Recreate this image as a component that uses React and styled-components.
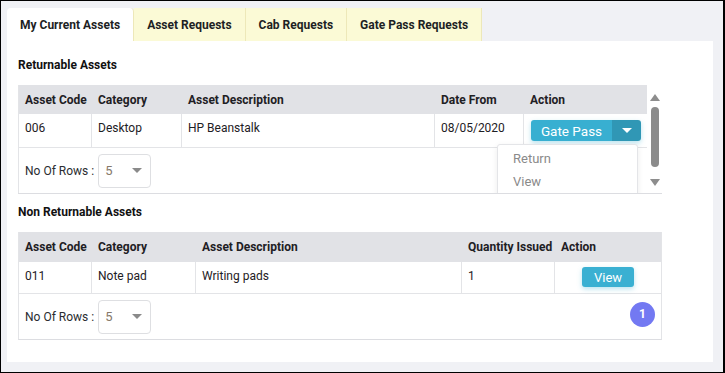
import React from 'react'
import styled, { createGlobalStyle } from 'styled-components'

const Global = createGlobalStyle`
body {
  margin: 0;
  font-family: Roboto, "Liberation Sans", sans-serif;
  color: #212529;
}
`

const Frame = styled.div`
width: 725px;
height: 373px;
box-sizing: border-box;
border: 1px solid #000;
border-right-width: 2px;
background: #f0f1f5;
padding: 7px 10px 0 6px;
`

const Tabs = styled.div`
display: flex;
height: 33px;
`

const Tab = styled.div`
display: flex;
align-items: center;
padding: 0 13px;
background: ${p => p.$active ? '#fff' : '#fbfad6'};
border-right: 1px solid #ede8b9;
border-radius: ${p => p.$active ? '4px 4px 0 0' : '0'};
font-size: 12px;
font-weight: 700;
color: #1d1f24;
`

const Panel = styled.div`
background: #fff;
width: 706px;
height: 321px;
box-sizing: border-box;
padding: 17px 11px 0;
`

const Heading = styled.h3`
margin: 0 0 13px;
font-size: 12px;
line-height: 14px;
font-weight: 700;
color: #111;
`

const ScrollBox = styled.div`
position: relative;
display: flex;
width: 644px;
height: 108px;
overflow: hidden;
border-bottom: 1px solid #dcdde1;
margin-bottom: 11px;
`

const Table = styled.div`
width: ${p => p.$width}px;
border-left: 1px solid #e3e4e7;
border-right: ${p => p.$closed ? '1px solid #e3e4e7' : '0'};
border-bottom: ${p => p.$closed ? '1px solid #dcdde1' : '0'};
box-sizing: border-box;
font-size: 12px;
`

const Row = styled.div`
display: grid;
grid-template-columns: ${p => p.$cols};
height: ${p => p.$h}px;
background: ${p => p.$head ? '#e1e2e6' : '#fff'};
font-weight: ${p => p.$head ? 700 : 400};
border-bottom: ${p => p.$head ? '0' : '1px solid #e3e4e7'};
box-sizing: border-box;
`

const Cell = styled.div`
display: flex;
align-items: ${p => p.$head ? 'center' : 'flex-start'};
justify-content: ${p => p.$center ? 'center' : 'flex-start'};
padding: ${p => p.$head ? '0 6px' : '7px 6px 0'};
border-right: ${p => p.$head || p.$last ? '0' : '1px solid #e3e4e7'};
white-space: nowrap;
color: #1e2024;
`

const Footer = styled.div`
display: flex;
align-items: center;
justify-content: space-between;
height: ${p => p.$h}px;
padding: 0 6px;
`

const RowsPick = styled.div`
display: flex;
align-items: center;
gap: 4px;
font-size: 12px;
color: #2a2c30;
`

const Select = styled.div`
display: flex;
align-items: center;
justify-content: space-between;
width: 53px;
height: 34px;
box-sizing: border-box;
border: 1px solid #dedfe2;
border-radius: 4px;
padding: 0 8px 0 6px;
font-size: 13px;
color: #86796a;
`

const Caret = styled.span`
width: 0;
height: 0;
border-left: 5px solid transparent;
border-right: 5px solid transparent;
border-top: 5px solid ${p => p.$color || '#8a8a8a'};
`

const Split = styled.div`
display: flex;
height: 21px;
margin: -1px 0 0 1px;
border-radius: 3px;
overflow: hidden;
box-shadow: 0 2px 5px rgba(56, 175, 209, 0.35);
`

const SplitMain = styled.div`
display: flex;
align-items: center;
justify-content: center;
width: 81px;
background: #38afd1;
color: #fff;
font-size: 13.5px;
`

const SplitToggle = styled.div`
display: flex;
align-items: center;
justify-content: center;
width: 29px;
background: #3097b5;
`

const Menu = styled.div`
position: absolute;
left: 479px;
top: 59px;
width: 141px;
height: 64px;
box-sizing: border-box;
background: #fff;
border: 1px solid #e4e5e8;
border-radius: 3px;
box-shadow: 0 2px 6px rgba(0, 0, 0, 0.08);
padding-top: 2px;
`

const MenuItem = styled.div`
padding: 0 15px;
height: 23px;
display: flex;
align-items: center;
font-size: 13px;
color: #8a8a8a;
`

const Scrollbar = styled.div`
display: flex;
flex-direction: column;
align-items: center;
width: 15px;
padding-top: 9px;
`

const Arrow = styled.span`
width: 0;
height: 0;
border-left: 5px solid transparent;
border-right: 5px solid transparent;
${p => p.$up ? 'border-bottom: 7px solid #8d8d8d;' : 'border-top: 7px solid #8d8d8d;'}
`

const Thumb = styled.div`
width: 8px;
height: 60px;
border-radius: 4px;
background: #8b8b8b;
margin: 6px 0 12px;
`

const ViewButton = styled.div`
display: flex;
align-items: center;
justify-content: center;
width: 52px;
height: 20px;
margin-top: -2px;
border-radius: 3px;
background: #3ab0d2;
color: #fff;
font-size: 13px;
box-shadow: 0 2px 5px rgba(56, 175, 209, 0.35);
`

const PageDot = styled.div`
display: flex;
align-items: center;
justify-content: center;
width: 25px;
height: 25px;
margin-top: -5px;
border-radius: 50%;
background: #7379f2;
color: #fff;
font-size: 12px;
font-weight: 700;
`

const cols1 = '73px 90px 253px 89px 124px'
const cols2 = '73px 104px 266px 93px 106px'

const RowsSelect = () => (
  <RowsPick>
    No Of Rows :
    <Select>5<Caret /></Select>
  </RowsPick>
)

export default function App() {
  return (
    <Frame>
      <Global />
      <Tabs>
        <Tab $active>My Current Assets</Tab>
        <Tab>Asset Requests</Tab>
        <Tab>Cab Requests</Tab>
        <Tab>Gate Pass Requests</Tab>
      </Tabs>
      <Panel>
        <Heading>Returnable Assets</Heading>
        <ScrollBox>
          <Table $width={629}>
            <Row $head $cols={cols1} $h={29}>
              <Cell $head>Asset Code</Cell>
              <Cell $head>Category</Cell>
              <Cell $head>Asset Description</Cell>
              <Cell $head>Date From</Cell>
              <Cell $head>Action</Cell>
            </Row>
            <Row $cols={cols1} $h={34}>
              <Cell>006</Cell>
              <Cell>Desktop</Cell>
              <Cell>HP Beanstalk</Cell>
              <Cell>08/05/2020</Cell>
              <Cell $last>
                <Split>
                  <SplitMain>Gate Pass</SplitMain>
                  <SplitToggle><Caret $color="#fff" /></SplitToggle>
                </Split>
              </Cell>
            </Row>
            <Footer $h={45}>
              <RowsSelect />
            </Footer>
          </Table>
          <Scrollbar>
            <Arrow $up />
            <Thumb />
            <Arrow />
          </Scrollbar>
          <Menu>
            <MenuItem>Return</MenuItem>
            <MenuItem>View</MenuItem>
          </Menu>
        </ScrollBox>
        <Heading>Non Returnable Assets</Heading>
        <Table $width={644} $closed>
          <Row $head $cols={cols2} $h={30}>
            <Cell $head>Asset Code</Cell>
            <Cell $head>Category</Cell>
            <Cell $head>Asset Description</Cell>
            <Cell $head>Quantity Issued</Cell>
            <Cell $head>Action</Cell>
          </Row>
          <Row $cols={cols2} $h={32}>
            <Cell>011</Cell>
            <Cell>Note pad</Cell>
            <Cell>Writing pads</Cell>
            <Cell>1</Cell>
            <Cell $last $center><ViewButton>View</ViewButton></Cell>
          </Row>
          <Footer $h={45}>
            <RowsSelect />
            <PageDot>1</PageDot>
          </Footer>
        </Table>
      </Panel>
    </Frame>
  )
}
